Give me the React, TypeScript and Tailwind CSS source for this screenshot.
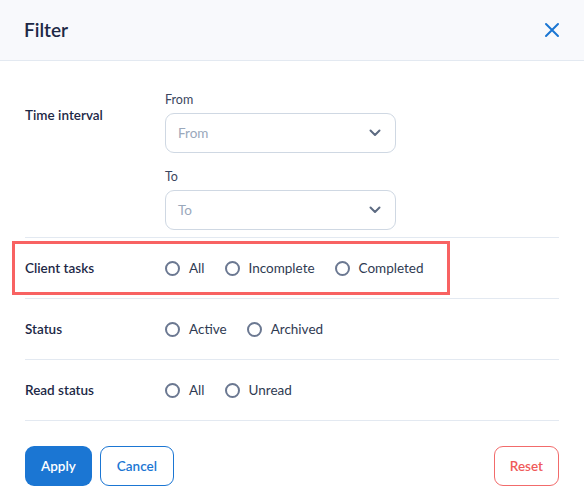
import React from "react";

const Radio = ({ label }: { label: string }) => (
  <label className="flex items-center gap-[9px] text-[13.5px] text-[#2f3b52]">
    <span className="w-[15px] h-[15px] rounded-full border-2 border-[#6b7891] bg-white" />
    {label}
  </label>
);

const SelectBox = ({ placeholder }: { placeholder: string }) => (
  <div className="w-[231px] h-[40px] rounded-[9px] border border-[#cfd8e3] flex items-center justify-between pl-[12px] pr-[14px]">
    <span className="text-[13.5px] text-[#9aa8bb]">{placeholder}</span>
    <svg width="12" height="8" viewBox="0 0 12 8" fill="none">
      <path d="M1.5 1.5 6 6l4.5-4.5" stroke="#5d6b82" strokeWidth="2" strokeLinecap="round" strokeLinejoin="round" />
    </svg>
  </div>
);

const Row = ({
  label,
  children,
  highlight,
}: {
  label: string;
  children: React.ReactNode;
  highlight?: boolean;
}) => (
  <div className="relative flex items-center h-[61px] border-b border-[#e3e9f1]">
    <div className="w-[140px] text-[13.5px] font-semibold text-[#1d2846]">{label}</div>
    <div className="flex items-center gap-[20px]">{children}</div>
    {highlight && (
      <div className="absolute left-[-13px] top-[3px] w-[438px] h-[54px] border-[3px] border-[#f86262]" />
    )}
  </div>
);

export default function App() {
  return (
    <div className="w-[584px] h-[497px] bg-white" style={{ fontFamily: "Lato, 'Noto Sans', sans-serif" }}>
      <div className="h-[61px] bg-[#f8f9fc] border-b border-[#e3e9f1] flex items-center justify-between pl-[24px] pr-[24px]">
        <h1 className="text-[19px] font-semibold text-[#1d2846]">Filter</h1>
        <svg width="16" height="16" viewBox="0 0 16 16" fill="none">
          <path d="M2 2l12 12M14 2 2 14" stroke="#1b76d3" strokeWidth="2" strokeLinecap="round" />
        </svg>
      </div>
      <div className="px-[25px]">
        <div className="flex border-b border-[#e3e9f1] pt-[32px] pb-[7px]">
          <div className="w-[140px] pt-[12px] text-[13.5px] font-semibold text-[#1d2846]">Time interval</div>
          <div className="flex flex-col">
            <div className="text-[12.5px] text-[#3a4660] mb-[5px] leading-[16px] -mt-[1px]">From</div>
            <SelectBox placeholder="From" />
            <div className="text-[12.5px] text-[#3a4660] mt-[16px] mb-[5px] leading-[16px]">To</div>
            <SelectBox placeholder="To" />
          </div>
        </div>
        <Row label="Client tasks" highlight>
          <Radio label="All" />
          <Radio label="Incomplete" />
          <Radio label="Completed" />
        </Row>
        <Row label="Status">
          <Radio label="Active" />
          <Radio label="Archived" />
        </Row>
        <Row label="Read status">
          <Radio label="All" />
          <Radio label="Unread" />
        </Row>
        <div className="flex items-center justify-between pt-[25px]">
          <div className="flex gap-[8px]">
            <button className="h-[40px] px-[16px] rounded-[9px] bg-[#1b76d3] text-white text-[13.5px] font-semibold">Apply</button>
            <button className="h-[40px] px-[16px] rounded-[9px] border border-[#1b76d3] text-[#1b76d3] text-[13.5px] font-semibold">Cancel</button>
          </div>
          <button className="h-[40px] px-[15px] rounded-[9px] border border-[#f26b6b] text-[#ef5a5a] text-[13.5px] font-semibold">Reset</button>
        </div>
      </div>
    </div>
  );
}
